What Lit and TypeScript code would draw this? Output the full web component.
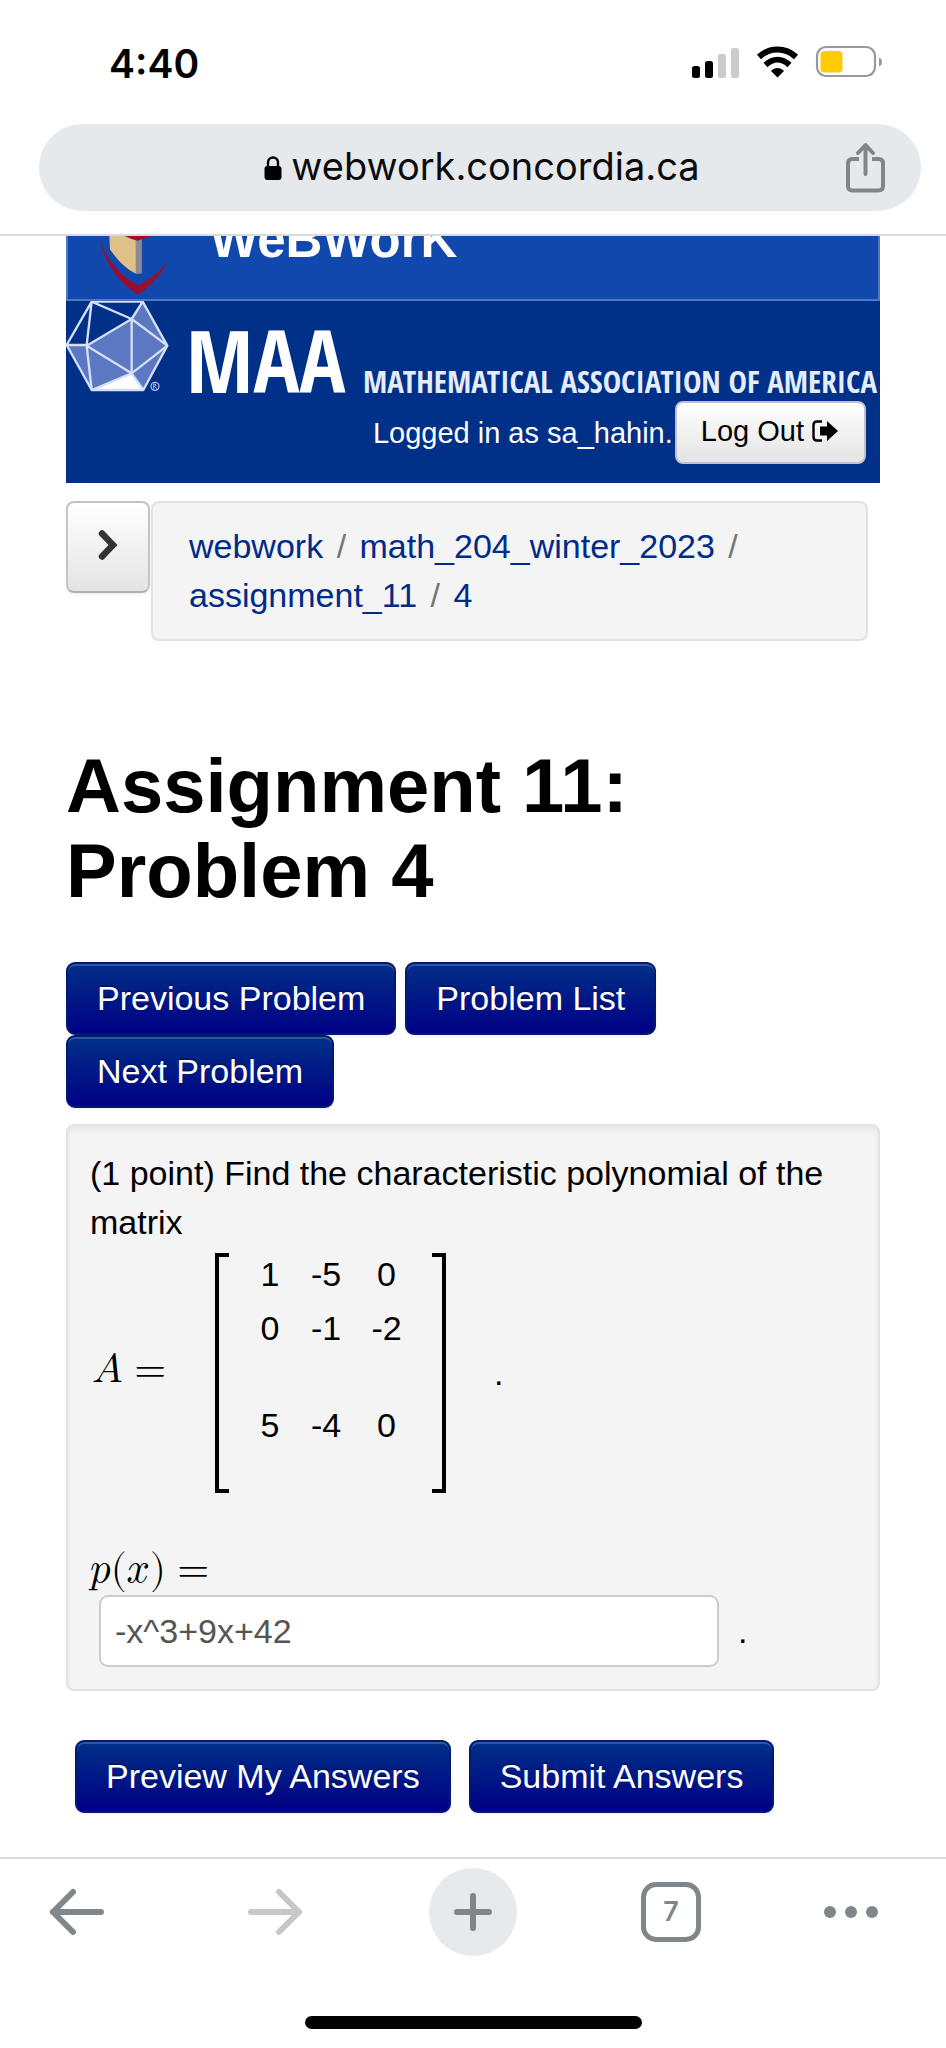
import { LitElement, html, css } from "lit";
import { customElement, state } from "lit/decorators.js";

const MATRIX = [
  ["1", "-5", "0"],
  ["0", "-1", "-2"],
  ["5", "-4", "0"],
];

@customElement("status-bar")
export class StatusBar extends LitElement {
  static styles = css`
    :host {
      display: flex;
      justify-content: space-between;
      align-items: center;
      padding: 39px 56px 0 109px;
      height: 50px;
      font: 600 39px/50px Inter, sans-serif;
    }
    svg { display: block; }
  `;
  render() {
    return html`
      <time>4:40</time>
      <svg width="210" height="50" viewBox="0 0 210 50" role="img" aria-label="Signal, Wi-Fi and battery">
        <rect x="12" y="27" width="8" height="12" rx="2.5" />
        <rect x="25" y="22" width="8" height="17" rx="2.5" />
        <rect x="38" y="15" width="8" height="24" rx="2.5" fill="#cbcbcb" />
        <rect x="51" y="9" width="8" height="30" rx="2.5" fill="#cbcbcb" />
        <g fill="none" stroke="#000" stroke-width="6">
          <path d="M79 18C89.500 8 105.500 8 116 18" />
          <path d="M85.500 26C93 19 102 19 109.500 26" />
        </g>
        <path d="M91 32C94.500 28 100.500 28 104 32L97.500 38.500Z" />
        <rect x="137" y="8" width="58" height="29" rx="9" fill="#fff" stroke="#98989b" stroke-width="2.200" />
        <rect x="140.500" y="12" width="22" height="21.500" rx="4" fill="#fecb00" />
        <path d="M199 18.500C203 20 203 26 199 27.500Z" fill="#98989b" />
      </svg>
    `;
  }
}

@customElement("address-bar")
export class AddressBar extends LitElement {
  static styles = css`
    :host { display: block; padding: 35px 25px 23px 39px; border-bottom: 2px solid #d9dadb; }
    .pill {
      display: grid;
      grid-template-columns: 1fr auto 1fr;
      align-items: center;
      height: 87px;
      padding: 0 32px 0 36px;
      border-radius: 44px;
      background: #e6e9ec;
    }
    .url { grid-column: 2; display: flex; align-items: center; gap: 9px; font: 38px/48px Inter, sans-serif; color: #0b0b0c; }
    .url span { padding-bottom: 4px; }
    .share { justify-self: end; border: 0; padding: 0; background: none; }
    svg { display: block; }
  `;
  render() {
    return html`
      <div class="pill">
        <div class="url">
          <svg width="18" height="26" viewBox="0 0 18 26">
            <rect x="0.500" y="11" width="17" height="14" rx="3" />
            <path d="M4 12V7.500a5 5 0 0 1 10 0V12" fill="none" stroke="#000" stroke-width="2.400" />
          </svg>
          <span>webwork.concordia.ca</span>
        </div>
        <button class="share" aria-label="Share">
          <svg width="46" height="52" viewBox="0 0 46 52" fill="none" stroke="#808689" stroke-width="4">
            <path d="M16 17H9.500Q5 17 5 21.500V44Q5 48.500 9.500 48.500H35.500Q40 48.500 40 44V21.500Q40 17 35.500 17H29" />
            <path d="M22.500 32V3.500M15 11L22.500 3L30 11" stroke-linecap="round" stroke-linejoin="round" />
          </svg>
        </button>
      </div>
    `;
  }
}

@customElement("site-header")
export class SiteHeader extends LitElement {
  static styles = css`
    :host { display: block; background: #003087; color: #fff; }
    .brand {
      display: flex;
      gap: 42px;
      height: 63px;
      border: solid #4f78bd;
      border-width: 0 2px 2px;
      background: #1048ae;
      overflow: hidden;
    }
    .crest { flex: none; margin-left: -2px; }
    .name { margin-top: -25px; font-size: 51px; line-height: 58px; font-weight: bold; }
    .maa {
      display: flex;
      align-items: baseline;
      height: 100px;
      padding-right: 3px;
      font-family: "Open Sans Condensed", "Open Sans", sans-serif;
      font-stretch: condensed;
      font-weight: bold;
      line-height: 118px;
    }
    .maa svg { align-self: flex-start; }
    .short { flex: none; margin-left: 14px; font-size: 86px; }
    .long { flex: 1; font-size: 31px; white-space: nowrap; text-align: right; color: #e4ecff; }
    .user { display: flex; justify-content: flex-end; align-items: center; gap: 2px; padding: 0 14px 19px; font-size: 29px; line-height: 40px; }
    .logout {
      display: flex;
      align-items: center;
      gap: 8px;
      height: 63px;
      padding: 0 26px 4px 24px;
      border: 2px solid #bcc2d0;
      border-radius: 8px;
      background: linear-gradient(#fff, #e4e4e4);
      font: inherit;
      color: #000;
    }
    svg { display: block; flex: none; }
  `;
  render() {
    return html`
      <div class="brand">
        <svg class="crest" width="102" height="63" viewBox="0 0 306 189">
          <path d="M130 0L132 40Q165 90 207 112L226 112V0Z" fill="#dfc187" />
          <path d="M209 0V113L227 112V0Z" fill="#8b8a92" />
          <path d="M176 0H258Q235 8 215 14Q195 10 176 0Z" fill="#a60d2c" />
          <path d="M100 14Q150 120 217 147Q262 128 308 76Q270 140 217 176Q135 130 100 14Z" fill="#980f30" />
        </svg>
        <div class="name">WeBWorK</div>
      </div>
      <div class="maa">
        <svg width="106" height="94" viewBox="0 0 318 282">
          <path d="M2 132H62L197 54L230 2L304 134L232 267H77Z" fill="#5c78c2" />
          <path d="M77 267L197 217L232 267Z" fill="#fff" />
          <path
            d="M77 2H230L304 134L232 267H77L2 132ZM2 132H62L77 2L197 54L230 2M62 134L197 54V217ZM62 134L77 267L197 217L232 267M197 217L304 134L197 54"
            fill="none" stroke="#d5dff6" stroke-width="7" stroke-linejoin="round" />
          <circle cx="267" cy="256" r="12" fill="none" stroke="#a9bbe4" stroke-width="4" />
          <path d="M263 263V249H268Q272 253 267 256H263M267 256L272 263" fill="none" stroke="#a9bbe4" stroke-width="3" />
        </svg>
        <div class="short">MAA</div>
        <div class="long">MATHEMATICAL ASSOCIATION OF AMERICA</div>
      </div>
      <div class="user">
        <span>Logged in as sa_hahin.</span>
        <button class="logout">
          Log Out
          <svg width="26" height="22" viewBox="0 0 26 22">
            <path d="M10 1.500H5Q1.500 1.500 1.500 5V17Q1.500 20.500 5 20.500H10" fill="none" stroke="#000" stroke-width="2.400" />
            <path d="M8 6.500H15V1L26 11L15 21V15.500H8Z" />
          </svg>
        </button>
      </div>
    `;
  }
}

@customElement("problem-panel")
export class ProblemPanel extends LitElement {
  @state() private answer = "-x^3+9x+42";

  static styles = css`
    :host {
      display: block;
      padding: 23px 22px 22px;
      border: 2px solid #e2e2e2;
      border-radius: 8px;
      background: #f4f4f4;
      box-shadow: inset 0 3px 4px #e4e4e4;
      line-height: 49px;
    }
    p { margin: 0; }
    math { font-family: "Latin Modern Math", "STIX Two Math", "Liberation Serif", serif; font-size: 41px; }
    .equation { display: flex; align-items: center; margin-top: 6px; }
    .lhs { width: 123px; padding: 0 0 6px 2px; }
    .matrix { display: flex; height: 240px; }
    .bracket { width: 10px; border: 4px solid #000; }
    .left { border-right: 0; }
    .right { border-left: 0; }
    table { margin: 0 13px; border-collapse: collapse; line-height: 43px; text-align: center; table-layout: fixed; width: 177px; }
    td { padding: 0; vertical-align: top; width: 56px; }
    td:last-child { width: 65px; }
    tr { height: 54px; }
    tr:nth-child(2) { height: 97px; }
    tr:nth-child(3) { height: 89px; }
    .stop { margin-left: 48px; }
    .answer { display: block; margin-top: 53px; height: 49px; }
    .entry { display: flex; align-items: center; gap: 19px; padding-left: 9px; }
    input {
      box-sizing: border-box;
      flex: 0 1 620px;
      min-width: 0;
      height: 72px;
      padding: 0 14px;
      border: 2px solid #ccc;
      border-radius: 9px;
      background: #fff;
      font: inherit;
      color: #555;
    }
  `;
  render() {
    return html`
      <p>(1 point) Find the characteristic polynomial of the matrix</p>
      <div class="equation">
        <div class="lhs"><math><mi>A</mi><mo>=</mo></math></div>
        <div class="matrix">
          <div class="bracket left"></div>
          <table>
            ${MATRIX.map((row) => html`<tr>${row.map((v) => html`<td>${v}</td>`)}</tr>`)}
          </table>
          <div class="bracket right"></div>
        </div>
        <span class="stop">.</span>
      </div>
      <label class="answer" for="answer">
        <math><mi>p</mi><mo stretchy="false">(</mo><mi>x</mi><mo stretchy="false">)</mo><mo>=</mo></math>
      </label>
      <div class="entry">
        <input id="answer" type="text" .value=${this.answer}
          @input=${(e: InputEvent) => (this.answer = (e.target as HTMLInputElement).value)} />
        <span>.</span>
      </div>
    `;
  }
}

@customElement("browser-toolbar")
export class BrowserToolbar extends LitElement {
  static styles = css`
    :host { display: block; border-top: 2px solid #d9dadb; }
    .row {
      display: grid;
      grid-template-columns: 176fr 198fr 198fr 198fr 176fr;
      align-items: center;
      justify-items: center;
      padding-top: 9px;
    }
    button { display: grid; place-items: center; border: 0; padding: 0; background: none; color: #808689; }
    svg { display: block; grid-area: 1 / 1; }
    .back { justify-self: start; margin-left: 49px; }
    .more { justify-self: end; margin-right: 67px; }
    .new { width: 88px; height: 88px; border-radius: 50%; background: #e8e9ed; }
    .tabs { box-sizing: border-box; width: 60px; height: 60px; border: 5px solid #808689; border-radius: 15px; font: 600 27px/32px Inter, sans-serif; }
    .home { width: 337px; height: 13px; margin: 60px auto 19px; border-radius: 7px; background: #000; }
  `;
  render() {
    return html`
      <div class="row">
        <button class="back" aria-label="Back">
          <svg width="56" height="48" viewBox="0 0 56 48" fill="none" stroke="#808689" stroke-width="6" stroke-linecap="round" stroke-linejoin="round">
            <path d="M52 24H4M24 4L4 24L24 44" />
          </svg>
        </button>
        <button aria-label="Forward" disabled>
          <svg width="56" height="48" viewBox="0 0 56 48" fill="none" stroke="#c7c7c7" stroke-width="6" stroke-linecap="round" stroke-linejoin="round">
            <path d="M4 24H52M32 4L52 24L32 44" />
          </svg>
        </button>
        <button class="new" aria-label="New tab">
          <svg width="40" height="40" viewBox="0 0 40 40" stroke="#808689" stroke-width="6" stroke-linecap="round">
            <path d="M4 20H36M20 4V36" />
          </svg>
        </button>
        <button class="tabs" aria-label="Open tabs">7</button>
        <button class="more" aria-label="More">
          <svg width="56" height="14" viewBox="0 0 56 14" fill="#808689">
            <circle cx="7" cy="7" r="6" /><circle cx="28" cy="7" r="6" /><circle cx="49" cy="7" r="6" />
          </svg>
        </button>
      </div>
      <div class="home"></div>
    `;
  }
}

@customElement("app-root")
export class AppRoot extends LitElement {
  static styles = css`
    :host {
      display: flex;
      flex-direction: column;
      min-height: 100vh;
      background: #fff;
      color: #000;
      font: 34px/49px "Liberation Sans", Arial, sans-serif;
    }
    main { flex: 1; padding: 0 66px; }
    .trail { display: flex; align-items: flex-start; gap: 1px; margin: 18px 12px 0 0; }
    .expand {
      display: grid;
      place-items: center;
      flex: none;
      box-sizing: border-box;
      width: 84px;
      height: 92px;
      padding: 0 0 4px;
      border: 2px solid #c4c4c4;
      border-bottom-color: #b0b0b0;
      border-radius: 8px;
      background: linear-gradient(#fff, #e4e4e4);
      box-shadow: 0 2px 3px #0000000d;
    }
    .crumbs { flex: 1; padding: 19px 36px; border: 2px solid #e2e2e2; border-radius: 8px; background: #f4f4f4; color: #777; }
    .sep { padding: 0 4px; }
    a { color: #002b86; text-decoration: none; }
    h1 { max-width: 700px; margin: 102px 0 49px; font-size: 76px; line-height: 85px; font-weight: bold; }
    .nav { display: flex; flex-wrap: wrap; column-gap: 9px; max-width: 700px; }
    .primary {
      height: 73px;
      padding: 0 29px;
      border: 2px solid #001a72;
      border-radius: 9px;
      background: linear-gradient(#003087, #000085);
      box-shadow: inset 0 2px 0 #2f55a3, 0 2px 3px #0000000d;
      font: inherit;
      color: #fff;
      text-shadow: 0 -2px 0 #00000040;
    }
    problem-panel { margin-top: 16px; }
    .actions { display: flex; flex-wrap: wrap; gap: 18px; margin: 49px 0 0 9px; }
  `;
  render() {
    return html`
      <status-bar></status-bar>
      <address-bar></address-bar>
      <main>
        <site-header></site-header>
        <div class="trail">
          <button class="expand" aria-label="Expand menu">
            <svg width="20" height="32" viewBox="0 0 20 32" fill="none" stroke="#333" stroke-width="6.500" stroke-linecap="round">
              <path d="M4 4.500L15 16L4 27.500" />
            </svg>
          </button>
          <nav class="crumbs">
            <a href="#">webwork</a> <span class="sep">/</span>
            <a href="#">math_204_winter_2023</a> <span class="sep">/</span>
            <a href="#">assignment_11</a> <span class="sep">/</span>
            <a href="#">4</a>
          </nav>
        </div>
        <h1>Assignment 11: Problem 4</h1>
        <div class="nav">
          <button class="primary">Previous Problem</button>
          <button class="primary">Problem List</button>
          <button class="primary">Next Problem</button>
        </div>
        <problem-panel></problem-panel>
        <div class="actions">
          <button class="primary">Preview My Answers</button>
          <button class="primary">Submit Answers</button>
        </div>
      </main>
      <browser-toolbar></browser-toolbar>
    `;
  }
}
